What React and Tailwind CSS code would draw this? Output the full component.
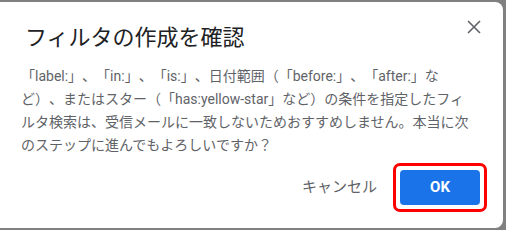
import React from "react";

const font = { fontFamily: "Roboto, 'Noto Sans CJK JP', sans-serif" };

export default function App() {
  return (
    <div className="w-[506px] h-[230px] bg-[#808080] overflow-hidden" style={font}>
      <div className="-ml-2 mt-[2px] w-[511px] h-[226px] bg-white rounded-lg flex flex-col [text-spacing-trim:space-all]">
        <div className="flex items-start justify-between pl-[33px] pr-[17px] pt-[20px]">
          <h1 className="text-[22px] leading-[32px] text-[#202124]">フィルタの作成を確認</h1>
          <button className="-mt-[7px] w-6 h-6 flex items-center justify-center text-[#5f6368]">
            <svg width="14" height="14" viewBox="0 0 14 14" fill="none" stroke="currentColor" strokeWidth="1.6">
              <path d="M1 1L13 13M13 1L1 13" />
            </svg>
          </button>
        </div>
        <p className="pl-[29px] pr-[30px] mt-[11px] text-[14px] leading-[23px] text-[#5f6368]">
          「label:」、「in:」、「is:」、日付範囲（「before:」、「after:」など）、またはスター（「has:yellow-star」など）の条件を指定したフィルタ検索は、受信メールに一致しないためおすすめしません。本当に次のステップに進んでもよろしいですか？
        </p>
        <div className="flex items-center justify-end gap-[4px] pr-[16px] mt-[6px]">
          <button className="px-3 h-9 text-[15px] text-[#5f6368]">キャンセル</button>
          <div className="border-[3px] border-[#ff0000] rounded-[7px] p-[4px]">
            <button className="w-[80px] h-[35px] bg-[#1a73e8] rounded-[4px] text-white text-[15px] font-bold">OK</button>
          </div>
        </div>
      </div>
    </div>
  );
}
